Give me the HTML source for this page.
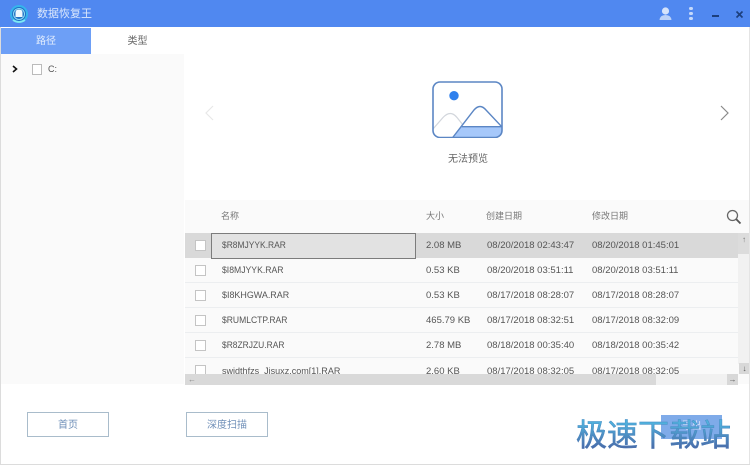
<!DOCTYPE html>
<html><head><meta charset="utf-8">
<style>
html,body{margin:0;padding:0;width:750px;height:465px;overflow:hidden;background:#fff}
body{position:relative;font-family:"Liberation Sans","Noto Sans CJK SC",sans-serif;color:#555}
div,span{position:absolute;white-space:nowrap}
.r{left:185px;width:553px;height:25px;border-bottom:1px solid #eceef0;box-sizing:border-box}
.t{font-size:9.5px;line-height:25px;color:#555}
.n{transform-origin:left center}
.cb{left:195px;width:9px;height:9px;background:#fff;border:1px solid #c4c4c4}
.h{font-size:9px;color:#777;top:210px;line-height:12px}
.btn{top:412px;width:80px;height:23px;border:1px solid #a9bccb;background:#fff;color:#6f8fb8;font-size:10px;line-height:26px;text-align:center}
</style></head><body>
<div style="left:0;top:0;width:750px;height:27px;background:#5088f0"></div>
<svg style="position:absolute;left:9px;top:4px" width="20" height="20" viewBox="0 0 20 20"><circle cx="10" cy="10" r="9" fill="#35b4ec"/><circle cx="10" cy="10" r="7" fill="#1f6fc4"/><circle cx="10" cy="10" r="5.500" fill="none" stroke="#8fdcf5" stroke-width="1"/><path d="M6.500 13V8.500Q6.500 5.500 10 5.500T13.500 8.500V13Z" fill="#eef8fe"/><path d="M4 16Q10 20 16 16" stroke="#7fe8f5" stroke-width="1.800" fill="none"/></svg>
<div style="left:37px;top:7px;font-size:11px;line-height:15px;color:#dce8fc">数据恢复王</div>
<svg style="position:absolute;left:658px;top:6px" width="15" height="15" viewBox="0 0 15 15"><circle cx="7.500" cy="5" r="3.600" fill="#d5e3fb"/><path d="M1.500 14Q2 9 7.500 9T13.500 14Z" fill="#bcd2f8"/></svg>
<div style="left:689px;top:7px;width:4px;height:3px;background:#c5d9fa;border-radius:2px"></div>
<div style="left:689px;top:12px;width:4px;height:3px;background:#c5d9fa;border-radius:2px"></div>
<div style="left:689px;top:17px;width:4px;height:3px;background:#c5d9fa;border-radius:2px"></div>
<div style="left:712px;top:15px;width:7px;height:2px;background:#1c3f7c"></div>
<svg style="position:absolute;left:735px;top:10px" width="9" height="9" viewBox="0 0 9 9"><path d="M1.500 1.500L7.500 7.500M7.500 1.500L1.500 7.500" stroke="#1c3f7c" stroke-width="1.600"/></svg>

<div style="left:1px;top:28px;width:90px;height:26px;background:#6d9ff6;color:#e4eefd;font-size:10px;line-height:27px;text-align:center">路径</div>
<div style="left:92px;top:28px;width:91px;height:26px;color:#666;font-size:10px;line-height:27px;text-align:center">类型</div>

<div style="left:1px;top:54px;width:183px;height:330px;background:#fafafa"></div>
<svg style="position:absolute;left:11px;top:65px" width="8" height="8" viewBox="0 0 8 8"><path d="M2 1L5.500 4L2 7" stroke="#111" stroke-width="1.600" fill="none"/></svg>
<div style="left:32px;top:64px;width:8px;height:9px;border:1px solid #bbb;background:#fff"></div>
<div style="left:48px;top:63px;font-size:9px;line-height:12px;color:#555">C:</div>

<svg style="position:absolute;left:203px;top:105px" width="12" height="16" viewBox="0 0 12 16"><path d="M10 1L3 8L10 15" stroke="#e8e8e8" stroke-width="1.200" fill="none"/></svg>
<svg style="position:absolute;left:719px;top:105px" width="12" height="16" viewBox="0 0 12 16"><path d="M2 1L9 8L2 15" stroke="#8a8a8a" stroke-width="1.200" fill="none"/></svg>

<svg style="position:absolute;left:432px;top:81px" width="71" height="57" viewBox="0 0 71 57">
<path d="M20.700 56L29.700 45.700H70V50Q70 56 64 56Z" fill="#a6c8fa"/>
<path d="M1 48L11 36.500Q18.500 28.500 25 36.500L31 44" stroke="#d2d6dc" stroke-width="1.200" fill="none"/>
<path d="M20.700 56.500L42 29Q48 22 54 29L69.700 45.700" stroke="#5b86c4" stroke-width="1.400" fill="none"/>
<path d="M29.700 45.700H70" stroke="#5b86c4" stroke-width="1.400"/>
<rect x="1" y="1" width="69" height="55.500" rx="7" fill="none" stroke="#5b86c4" stroke-width="1.600"/>
<circle cx="22" cy="14.700" r="4.700" fill="#2f80ed"/>
</svg>
<div style="left:448px;top:153px;font-size:10px;line-height:13px;color:#666">无法预览</div>

<div style="left:185px;top:200px;width:565px;height:184px;background:#fafafa"></div>
<div class="h" style="left:221px">名称</div>
<div class="h" style="left:426px">大小</div>
<div class="h" style="left:486px">创建日期</div>
<div class="h" style="left:592px">修改日期</div>
<svg style="position:absolute;left:726px;top:209px" width="16" height="16" viewBox="0 0 16 16"><circle cx="6.500" cy="6.500" r="5" fill="none" stroke="#666" stroke-width="1.300"/><path d="M10.300 10.300L14.500 14.500" stroke="#555" stroke-width="1.800"/></svg>

<div class="r" style="top:233px;height:25px;background:#d9d9d9;border:0"></div>
<div style="left:211px;top:233px;width:203px;height:24px;border:1px solid #7c7c7c;background:#e2e2e2"></div>
<div class="r" style="top:258px"></div>
<div class="r" style="top:283px"></div>
<div class="r" style="top:308px"></div>
<div class="r" style="top:333px"></div>

<div class="cb" style="top:240px"></div>
<div class="cb" style="top:265px"></div>
<div class="cb" style="top:290px"></div>
<div class="cb" style="top:315px"></div>
<div class="cb" style="top:340px"></div>
<div class="cb" style="top:365px"></div>

<div class="t n" style="left:222px;top:233px;transform:scaleX(.89)">$R8MJYYK.RAR</div><div class="t" style="left:426px;top:233px">2.08 MB</div><div class="t" style="left:487px;top:233px">08/20/2018 02:43:47</div><div class="t" style="left:592px;top:233px">08/20/2018 01:45:01</div>
<div class="t n" style="left:222px;top:258px;transform:scaleX(.91)">$I8MJYYK.RAR</div><div class="t" style="left:426px;top:258px">0.53 KB</div><div class="t" style="left:487px;top:258px">08/20/2018 03:51:11</div><div class="t" style="left:592px;top:258px">08/20/2018 03:51:11</div>
<div class="t n" style="left:222px;top:283px;transform:scaleX(.94)">$I8KHGWA.RAR</div><div class="t" style="left:426px;top:283px">0.53 KB</div><div class="t" style="left:487px;top:283px">08/17/2018 08:28:07</div><div class="t" style="left:592px;top:283px">08/17/2018 08:28:07</div>
<div class="t n" style="left:222px;top:308px;transform:scaleX(.9)">$RUMLCTP.RAR</div><div class="t" style="left:426px;top:308px">465.79 KB</div><div class="t" style="left:487px;top:308px">08/17/2018 08:32:51</div><div class="t" style="left:592px;top:308px">08/17/2018 08:32:09</div>
<div class="t n" style="left:222px;top:333px;transform:scaleX(.89)">$R8ZRJZU.RAR</div><div class="t" style="left:426px;top:333px">2.78 MB</div><div class="t" style="left:487px;top:333px">08/18/2018 00:35:40</div><div class="t" style="left:592px;top:333px">08/18/2018 00:35:42</div>
<div style="left:185px;top:358px;width:553px;height:16px;overflow:hidden">
<div class="t n" style="left:37px;top:1px;transform:scaleX(.95)">swidthfzs_Jisuxz.com[1].RAR</div><div class="t" style="left:241px;top:1px">2.60 KB</div><div class="t" style="left:302px;top:1px">08/17/2018 08:32:05</div><div class="t" style="left:407px;top:1px">08/17/2018 08:32:05</div>
</div>

<div style="left:738px;top:233px;width:12px;height:131px;background:#f1f1f1"></div>
<div style="left:738px;top:233px;width:12px;height:21px;background:#dcdcdc;color:#777;font-size:8px;line-height:14px;text-align:center">↑</div>
<div style="left:739px;top:363px;width:11px;height:11px;background:#d8d8d8;color:#555;font-size:8px;line-height:11px;text-align:center">↓</div>
<div style="left:185px;top:374px;width:553px;height:11px;background:#f1f1f1"></div>
<div style="left:185px;top:374px;width:471px;height:11px;background:#d9d9d9;color:#888;font-size:8px;line-height:11px;text-indent:3px">←</div>
<div style="left:727px;top:374px;width:11px;height:11px;background:#d8d8d8;color:#555;font-size:8px;line-height:11px;text-align:center">→</div>

<div class="btn" style="left:27px">首页</div>
<div class="btn" style="left:186px">深度扫描</div>
<div style="left:661px;top:415px;width:61px;height:24px;background:#7fabe9;color:#d8e6fa;font-size:10px;line-height:24px;text-align:center">导出</div>
<div style="left:576px;top:418px;font-size:31px;line-height:36px;font-weight:400;-webkit-text-stroke:.5px rgba(74,125,185,.65);background:linear-gradient(180deg,#4fb0dc 15%,#4a6aa8 85%);-webkit-background-clip:text;background-clip:text;color:transparent">极速下载站</div>

<div style="left:0;top:27px;width:1px;height:438px;background:#dcdcdc"></div>
<div style="left:749px;top:27px;width:1px;height:438px;background:#e4e4e4"></div>
<div style="left:0;top:464px;width:750px;height:1px;background:#dcdcdc"></div>
</body></html>
